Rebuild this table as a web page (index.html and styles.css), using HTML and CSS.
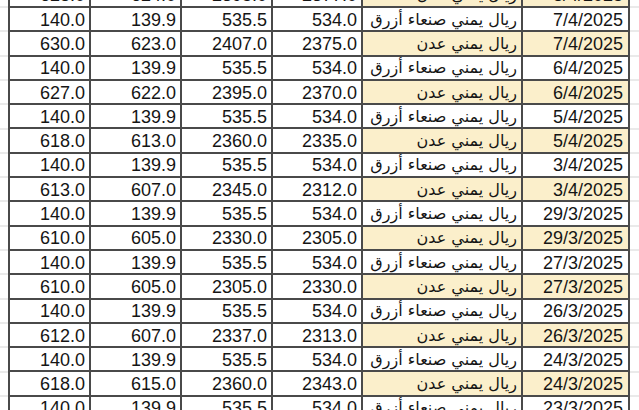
FILE: index.html
```html
<!DOCTYPE html>
<html lang="ar">
<head>
<meta charset="utf-8">
<link rel="stylesheet" href="styles.css">
</head>
<body>
<div class="sheet">
  <div class="grid">
    <div class="c num">628.0</div><div class="c num">624.0</div><div class="c num">2395.0</div><div class="c num">2377.0</div><div class="c ar hl">ريال يمني عدن</div><div class="c date hl">8/4/2025</div>
    <div class="c num">140.0</div><div class="c num">139.9</div><div class="c num">535.5</div><div class="c num">534.0</div><div class="c ar">ريال يمني صنعاء أزرق</div><div class="c date">7/4/2025</div>
    <div class="c num">630.0</div><div class="c num">623.0</div><div class="c num">2407.0</div><div class="c num">2375.0</div><div class="c ar hl">ريال يمني عدن</div><div class="c date hl">7/4/2025</div>
    <div class="c num">140.0</div><div class="c num">139.9</div><div class="c num">535.5</div><div class="c num">534.0</div><div class="c ar">ريال يمني صنعاء أزرق</div><div class="c date">6/4/2025</div>
    <div class="c num">627.0</div><div class="c num">622.0</div><div class="c num">2395.0</div><div class="c num">2370.0</div><div class="c ar hl">ريال يمني عدن</div><div class="c date hl">6/4/2025</div>
    <div class="c num">140.0</div><div class="c num">139.9</div><div class="c num">535.5</div><div class="c num">534.0</div><div class="c ar">ريال يمني صنعاء أزرق</div><div class="c date">5/4/2025</div>
    <div class="c num">618.0</div><div class="c num">613.0</div><div class="c num">2360.0</div><div class="c num">2335.0</div><div class="c ar hl">ريال يمني عدن</div><div class="c date hl">5/4/2025</div>
    <div class="c num">140.0</div><div class="c num">139.9</div><div class="c num">535.5</div><div class="c num">534.0</div><div class="c ar">ريال يمني صنعاء أزرق</div><div class="c date">3/4/2025</div>
    <div class="c num">613.0</div><div class="c num">607.0</div><div class="c num">2345.0</div><div class="c num">2312.0</div><div class="c ar hl">ريال يمني عدن</div><div class="c date hl">3/4/2025</div>
    <div class="c num">140.0</div><div class="c num">139.9</div><div class="c num">535.5</div><div class="c num">534.0</div><div class="c ar">ريال يمني صنعاء أزرق</div><div class="c date">29/3/2025</div>
    <div class="c num">610.0</div><div class="c num">605.0</div><div class="c num">2330.0</div><div class="c num">2305.0</div><div class="c ar hl">ريال يمني عدن</div><div class="c date hl">29/3/2025</div>
    <div class="c num">140.0</div><div class="c num">139.9</div><div class="c num">535.5</div><div class="c num">534.0</div><div class="c ar">ريال يمني صنعاء أزرق</div><div class="c date">27/3/2025</div>
    <div class="c num">610.0</div><div class="c num">605.0</div><div class="c num">2305.0</div><div class="c num">2330.0</div><div class="c ar hl">ريال يمني عدن</div><div class="c date hl">27/3/2025</div>
    <div class="c num">140.0</div><div class="c num">139.9</div><div class="c num">535.5</div><div class="c num">534.0</div><div class="c ar">ريال يمني صنعاء أزرق</div><div class="c date">26/3/2025</div>
    <div class="c num">612.0</div><div class="c num">607.0</div><div class="c num">2337.0</div><div class="c num">2313.0</div><div class="c ar hl">ريال يمني عدن</div><div class="c date hl">26/3/2025</div>
    <div class="c num">140.0</div><div class="c num">139.9</div><div class="c num">535.5</div><div class="c num">534.0</div><div class="c ar">ريال يمني صنعاء أزرق</div><div class="c date">24/3/2025</div>
    <div class="c num">618.0</div><div class="c num">615.0</div><div class="c num">2360.0</div><div class="c num">2343.0</div><div class="c ar hl">ريال يمني عدن</div><div class="c date hl">24/3/2025</div>
    <div class="c num">140.0</div><div class="c num">139.9</div><div class="c num">535.5</div><div class="c num">534.0</div><div class="c ar">ريال يمني صنعاء أزرق</div><div class="c date">23/3/2025</div>
  </div>
</div>
</body>
</html>
```
FILE: styles.css
```css
html, body {
  margin: 0;
  padding: 0;
  width: 639px;
  height: 410px;
  overflow: hidden;
  background: #fff;
}
.sheet {
  height: 410px;
  background-image: repeating-linear-gradient(180deg, #d4d4d4 0, #d4d4d4 1px, #ffffff 1px, #ffffff 24.31px);
  background-position: 0 6.5px;
  padding-left: 8px;
  overflow: hidden;
}
.grid {
  display: grid;
  grid-template-columns: 81px 91px 91px 90px 160px 107px;
  grid-auto-rows: 24.31px;
  width: 622px;
  box-sizing: border-box;
  border-left: 2px solid #4a4a4a;
  border-top: 2px solid #4a4a4a;
  margin-top: -18.31px;
  background: #fff;
}
.c {
  box-sizing: border-box;
  border-right: 2px solid #4a4a4a;
  border-bottom: 2px solid #4a4a4a;
  display: flex;
  align-items: center;
  justify-content: flex-end;
  color: #151515;
  white-space: nowrap;
  overflow: hidden;
}
.num {
  font-family: "Liberation Sans", Arial, sans-serif;
  font-size: 18px;
  padding-right: 4px;
  padding-top: 2px;
}
.date {
  font-family: "Liberation Sans", Arial, sans-serif;
  font-size: 18px;
  padding-right: 5px;
  padding-top: 2px;
}
.ar {
  font-family: "DejaVu Sans", sans-serif;
  font-size: 16px;
  direction: rtl;
  justify-content: flex-start;
  padding-right: 4px;
}
.hl {
  background: #fbefcb;
}
```
